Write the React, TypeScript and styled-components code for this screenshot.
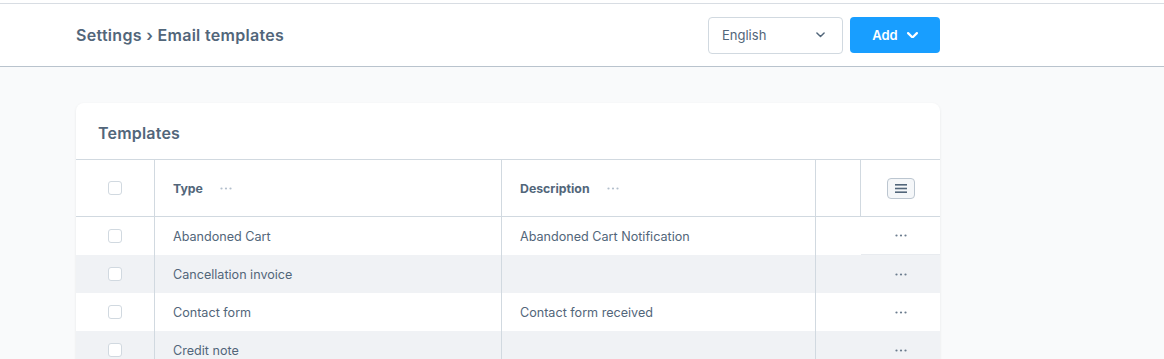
import React from "react";
import styled, { createGlobalStyle } from "styled-components";

const GlobalStyle = createGlobalStyle`
  html, body {
    margin: 0;
    padding: 0;
    background: #f9fafb;
    font-family: Inter, "Noto Sans", sans-serif;
    color: #52667a;
  }
  * {
    box-sizing: border-box;
  }
`;

type TCellStyle = {
  divider?: boolean;
  center?: boolean;
};

type TRowStyle = {
  striped?: boolean;
};

const Page = styled.div`
  min-height: 100vh;
  background: #f9fafb;
`;

const Header = styled.header`
  background: #fff;
  padding-top: 3px;
`;

const HeaderBar = styled.div`
  height: 64px;
  border-top: 1px solid #d8dde3;
  border-bottom: 1px solid #b9c3cd;
  display: flex;
  align-items: center;
  padding-left: 76px;
`;

const HeaderInner = styled.div`
  width: 864px;
  display: flex;
  align-items: center;
  justify-content: space-between;
`;

const Breadcrumb = styled.h1`
  margin: 0;
  font-size: 16px;
  font-weight: 600;
  color: #52667a;
  letter-spacing: 0.3px;
`;

const Actions = styled.div`
  display: flex;
  align-items: center;
  gap: 7px;
`;

const Select = styled.div`
  width: 135px;
  height: 37px;
  border: 1px solid #d1d9e0;
  border-radius: 4px;
  background: #fff;
  display: flex;
  align-items: center;
  justify-content: space-between;
  padding: 0 17px 0 13px;
  font-size: 13px;
  color: #52667a;
`;

const AddButton = styled.button`
  width: 90px;
  height: 36px;
  border: none;
  border-radius: 4px;
  background: #189eff;
  color: #fff;
  font-family: inherit;
  font-size: 13px;
  font-weight: 600;
  display: flex;
  align-items: center;
  justify-content: center;
  gap: 9px;
  padding: 0;
  cursor: pointer;
`;

const Content = styled.main`
  padding: 36px 0 0 76px;
`;

const Card = styled.section`
  width: 864px;
  background: #fff;
  border-radius: 8px 8px 0 0;
  box-shadow: 0 1px 3px rgba(0, 0, 0, 0.08);
  overflow: hidden;
`;

const CardTitle = styled.h2`
  margin: 0;
  height: 57px;
  padding: 3px 22px 0;
  display: flex;
  align-items: center;
  font-size: 16px;
  font-weight: 600;
  letter-spacing: 0.2px;
  color: #52667a;
  border-bottom: 1px solid #d1d9e0;
`;

const Grid = styled.div`
  display: grid;
  grid-template-columns: 79px 347px 314px 45px 79px;
`;

const HeadRow = styled(Grid)`
  height: 57px;
  border-bottom: 1px solid #d1d9e0;
`;

const BodyRow = styled(Grid)<TRowStyle>`
  height: 38px;
  background: ${({ striped }) => (striped ? "#f0f2f5" : "#fff")};
`;

const Cell = styled.div<TCellStyle>`
  display: flex;
  align-items: center;
  justify-content: ${({ center }) => (center ? "center" : "flex-start")};
  padding: ${({ center }) => (center ? "0" : "1px 18px 0")};
  border-right: ${({ divider }) => (divider ? "1px solid #d1d9e0" : "none")};
  font-size: 12.6px;
  color: #52667a;
  white-space: nowrap;
`;

const ActionCell = styled(Cell)<{ underline?: boolean }>`
  border-bottom: ${({ underline }) => (underline ? "1px solid #e8ebef" : "none")};
`;

const HeadLabel = styled.span`
  font-size: 12.3px;
  font-weight: 700;
  color: #52667a;
`;

const HeadMore = styled.span`
  margin-left: 17px;
  display: flex;
  align-items: center;
`;

const Checkbox = styled.span`
  width: 14px;
  height: 14px;
  border: 1px solid #d1d9e0;
  border-radius: 3px;
  background: #fff;
`;

const SettingsButton = styled.button`
  width: 28px;
  height: 21px;
  border: 1px solid #bcc6d0;
  border-radius: 4px;
  background: #f5f7f9;
  display: flex;
  align-items: center;
  justify-content: center;
  padding: 0;
`;

const Chevron: React.FC<{ color: string; size: number; weight: number }> = ({ color, size, weight }) => (
  <svg width={size} height={size * 0.6} viewBox="0 0 10 6" fill="none">
    <path d="M1 1l4 4 4-4" stroke={color} strokeWidth={weight} strokeLinecap="round" strokeLinejoin="round" />
  </svg>
);

const Dots: React.FC<{ color: string }> = ({ color }) => (
  <svg width="12" height="3" viewBox="0 0 12 3">
    <circle cx="1.5" cy="1.5" r="1.1" fill={color} />
    <circle cx="6" cy="1.5" r="1.1" fill={color} />
    <circle cx="10.5" cy="1.5" r="1.1" fill={color} />
  </svg>
);

const ListIcon = () => (
  <svg width="12" height="9" viewBox="0 0 12 9">
    <rect x="0" y="0" width="12" height="1.6" fill="#52667a" />
    <rect x="0" y="3.7" width="12" height="1.6" fill="#52667a" />
    <rect x="0" y="7.4" width="12" height="1.6" fill="#52667a" />
  </svg>
);

const templates = [
  { type: "Abandoned Cart", description: "Abandoned Cart Notification" },
  { type: "Cancellation invoice", description: "" },
  { type: "Contact form", description: "Contact form received" },
  { type: "Credit note", description: "" },
];

export default function App() {
  return (
    <Page>
      <GlobalStyle />
      <Header>
        <HeaderBar>
          <HeaderInner>
            <Breadcrumb>Settings › Email templates</Breadcrumb>
            <Actions>
              <Select>
                English
                <Chevron color="#52667a" size={9} weight={1.6} />
              </Select>
              <AddButton>
                Add
                <Chevron color="#fff" size={11} weight={2} />
              </AddButton>
            </Actions>
          </HeaderInner>
        </HeaderBar>
      </Header>
      <Content>
        <Card>
          <CardTitle>Templates</CardTitle>
          <HeadRow>
            <Cell center divider>
              <Checkbox />
            </Cell>
            <Cell divider>
              <HeadLabel>Type</HeadLabel>
              <HeadMore>
                <Dots color="#b3bfcc" />
              </HeadMore>
            </Cell>
            <Cell divider>
              <HeadLabel>Description</HeadLabel>
              <HeadMore>
                <Dots color="#b3bfcc" />
              </HeadMore>
            </Cell>
            <Cell divider />
            <Cell center>
              <SettingsButton>
                <ListIcon />
              </SettingsButton>
            </Cell>
          </HeadRow>
          {templates.map((t, i) => (
            <BodyRow key={t.type} striped={i % 2 === 1}>
              <Cell center divider>
                <Checkbox />
              </Cell>
              <Cell divider>{t.type}</Cell>
              <Cell divider>{t.description}</Cell>
              <Cell />
              <ActionCell center underline={i === 0}>
                <Dots color="#6b7c8e" />
              </ActionCell>
            </BodyRow>
          ))}
        </Card>
      </Content>
    </Page>
  );
}
